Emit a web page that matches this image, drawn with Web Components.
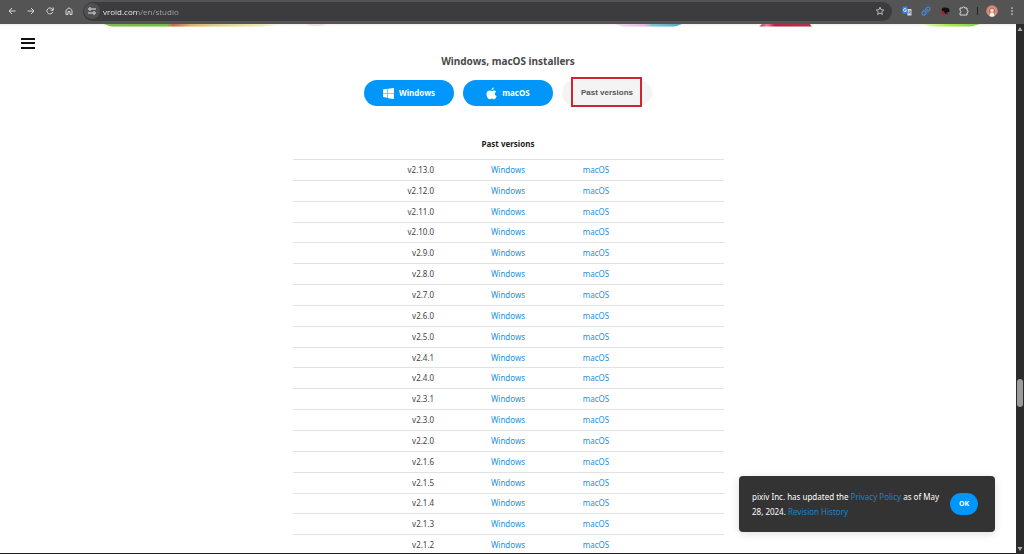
<!DOCTYPE html>
<html lang="en">
<head>
<meta charset="utf-8">
<title>VRoid Studio</title>
<style>
  html, body { height: 100%; }
  body { margin: 0; overflow: hidden; background: #fff; font-family: "Noto Sans", "Open Sans", sans-serif; font-size: 8px; line-height: 12px; color: #444; }
</style>
</head>
<body>
<browser-window></browser-window>

<script>
const define = (name, html, setup) => customElements.define(name, class extends HTMLElement {
  connectedCallback() {
    if (this.shadowRoot) return;
    const template = document.createElement('template');
    template.innerHTML = html;
    this.attachShadow({ mode: 'open' }).append(template.content.cloneNode(true));
    if (setup) setup(this, this.shadowRoot);
  }
});

define('tool-button', `
  <style>
    :host { display: flex; }
    button { display: flex; align-items: center; justify-content: center; width: 19px; height: 19px; padding: 0; border: 0; background: none; color: #d8d8d8; }
  </style>
  <button type="button"><slot></slot></button>`,
  (host, root) => root.querySelector('button').setAttribute('aria-label', host.getAttribute('label')));

define('address-bar', `
  <style>
    :host { display: flex; align-items: center; flex: 1; min-width: 0; height: 19px; margin: 0 5px; padding-right: 3px; border-radius: 10px; background: #3c3b3d; }
    .site { display: flex; align-items: center; justify-content: center; width: 16px; height: 16px; margin-left: 1px; border-radius: 50%; background: #505052; }
    input { flex: 1; min-width: 0; height: 16px; margin: 0 0 0 3px; padding: 0; border: 0; outline: 0; font: 8px/12px "Open Sans", sans-serif; color: #fff;
      background: linear-gradient(90deg, #fff 34px, #aaa 34px); -webkit-background-clip: text; background-clip: text; -webkit-text-fill-color: transparent; }
  </style>
  <span class="site"><svg width="8" height="8" viewBox="0 0 16 16" fill="none" stroke="#e6e6e6" stroke-width="2"><circle cx="4" cy="4" r="2.5"/><path d="M8 4h8M0 12h8"/><circle cx="12" cy="12" r="2.5"/></svg></span>
  <input type="text" value="vroid.com/en/studio" aria-label="Address">
  <tool-button label="Bookmark this page"><svg width="10" height="10" viewBox="0 0 20 20" fill="none" stroke="currentColor" stroke-width="1.6" stroke-linejoin="round"><path d="M10 2.500l2.200 5 5.300.5-4 3.600 1.200 5.400-4.700-2.900L5.300 17l1.200-5.400-4-3.600 5.300-.5z"/></svg></tool-button>`);

define('browser-toolbar', `
  <style>
    :host { display: flex; align-items: center; height: 22px; padding: 0 3px 2px 2px; background: #545454; }
    i { width: 1px; height: 8px; margin: 0 4px; background: #222; }
    .menu { margin-left: 1px; }
  </style>
  <tool-button label="Back"><svg width="8" height="8" viewBox="0 0 16 16" fill="none" stroke="currentColor" stroke-width="2"><path d="M15 8H2M8 2L2 8l6 6"/></svg></tool-button>
  <tool-button label="Forward"><svg width="8" height="8" viewBox="0 0 16 16" fill="none" stroke="currentColor" stroke-width="2"><path d="M1 8h13M8 2l6 6-6 6"/></svg></tool-button>
  <tool-button label="Reload"><svg width="8" height="8" viewBox="0 0 16 16" fill="none" stroke="currentColor" stroke-width="2"><path d="M13.500 10A6 6 0 1 1 12.500 4L14 6"/><path d="M14.500 1v5.500H9"/></svg></tool-button>
  <tool-button label="Home"><svg width="8" height="8" viewBox="0 0 16 16" fill="none" stroke="currentColor" stroke-width="2"><path d="M2 6.500L8 1.500l6 5V15h-4V9H6v6H2z"/></svg></tool-button>
  <address-bar></address-bar>
  <tool-button label="Translate"><svg width="10" height="10" viewBox="0 0 20 20"><path d="M9 6h9a1 1 0 0 1 1 1v11a1 1 0 0 1-1 1h-7z" fill="#d6d8dc"/><path d="M2 1h8l3 14H2a1 1 0 0 1-1-1V2a1 1 0 0 1 1-1z" fill="#3f83ee"/><path d="M8.500 6.300A3 3 0 1 0 9 8.500H6.500" fill="none" stroke="#fff" stroke-width="1.500"/><path d="M13 10h5M17 10c-.5 3-2 4-3 5M14 12l3.500 4" fill="none" stroke="#667" stroke-width="1.200"/></svg></tool-button>
  <tool-button label="Copy link"><svg width="10" height="10" viewBox="0 0 20 20" fill="none" stroke="#4b83d8" stroke-width="2.400" stroke-linecap="round"><path d="M9 6l3-3a3.500 3.500 0 0 1 5 5l-3.500 3.500M11 14l-3 3a3.500 3.500 0 0 1-5-5l3.500-3.500M7.500 12.500l5-5"/></svg></tool-button>
  <tool-button label="Extension"><svg width="10" height="10" viewBox="0 0 20 20"><path d="M3 9C3 4 6 3 11 3s8 2 8 6v3h-4v4H9l-1-4z" fill="#111"/><path d="M2 9l6 2 2 4-4 3-3-3z" fill="#a92430"/><path d="M11 14h4v3h-4z" fill="#6d2528"/></svg></tool-button>
  <tool-button label="Extensions"><svg width="10" height="10" viewBox="0 0 20 20" fill="none" stroke="currentColor" stroke-width="2" stroke-linejoin="round"><path d="M2 4h5a2.200 2.200 0 0 1 4.400 0H16v5a2.200 2.200 0 0 1 0 4.400V18H2v-4.500a2.300 2.300 0 0 0 0-4.500z"/></svg></tool-button>
  <i></i>
  <tool-button label="Profile"><svg width="12" height="12" viewBox="0 0 24 24"><circle cx="12" cy="12" r="11.500" fill="#d58b7c"/><path d="M6 13c0-5 3-7 6-7s6 2 6 7l-2 4H8z" fill="#b86557"/><circle cx="12" cy="11" r="3.500" fill="#f5ddcf"/><path d="M7 22l2-7h6l2 7c-3 2-7 2-10 0z" fill="#fff4e9"/></svg></tool-button>
  <tool-button class="menu" label="Menu"><svg width="8" height="8" viewBox="0 0 16 16" fill="currentColor"><circle cx="8" cy="2" r="1.700"/><circle cx="8" cy="8" r="1.700"/><circle cx="8" cy="14" r="1.700"/></svg></tool-button>`);

define('page-scrollbar', `
  <style>
    :host { display: flex; flex-direction: column; align-items: center; width: 8px; background: #2b2b2b; }
    svg { margin: 2px 0; }
    .before { flex: 351; }
    .thumb { width: 6px; height: 28px; border-radius: 3px; background: #9b9b9b; }
    .after { flex: 139; }
  </style>
  <svg width="6" height="6" viewBox="0 0 6 6" fill="#aaa"><path d="M3 1l2.500 4h-5z"/></svg>
  <span class="before"></span><span class="thumb"></span><span class="after"></span>
  <svg width="6" height="6" viewBox="0 0 6 6" fill="#aaa"><path d="M3 5L.5 1h5z"/></svg>`);

define('artwork-edge', `
  <style>
    :host { display: block; height: 3px; background: linear-gradient(#f4eeee, #fff); }
    svg { display: block; width: 100%; height: 3px; }
  </style>
  <svg viewBox="0 0 1016 3" preserveAspectRatio="none" aria-hidden="true">
    <defs>
      <linearGradient id="a"><stop offset="0" stop-color="#7fbd4f"/><stop offset=".36" stop-color="#78bd3c"/><stop offset=".4" stop-color="#c96a55"/><stop offset=".5" stop-color="#dcb26a"/><stop offset=".65" stop-color="#d9d183"/><stop offset="1" stop-color="#f7efd0"/></linearGradient>
      <linearGradient id="b"><stop offset="0" stop-color="#efdcee"/><stop offset=".45" stop-color="#e0b8df"/><stop offset=".55" stop-color="#7fc3d2"/><stop offset="1" stop-color="#53a9c0"/></linearGradient>
      <linearGradient id="c"><stop offset="0" stop-color="#a9304a"/><stop offset=".15" stop-color="#e08a99"/><stop offset=".3" stop-color="#b72443"/><stop offset="1" stop-color="#b8324d"/></linearGradient>
      <linearGradient id="d"><stop offset="0" stop-color="#e3f7bd"/><stop offset=".5" stop-color="#a9e64c"/><stop offset="1" stop-color="#84cf4b"/></linearGradient>
      <linearGradient id="fade" x2="0" y2="1"><stop offset=".5" stop-color="#fff" stop-opacity="0"/><stop offset="1" stop-color="#fff" stop-opacity=".7"/></linearGradient>
    </defs>
    <path d="M104 0H278L262 3H112z" fill="url(#a)"/>
    <path d="M306 0h20l-5 2h-10z" fill="#f3dde0"/>
    <path d="M615 0h67l-8 3h-50z" fill="url(#b)"/>
    <path d="M762 0h48l2 3h-53z" fill="url(#c)"/>
    <path d="M922 0h58l-10 3h-36z" fill="url(#d)"/>
    <path d="M0 0h1016v3H0z" fill="url(#fade)"/>
  </svg>`);

define('pill-button', `
  <style>
    :host { display: block; }
    button { display: flex; align-items: center; justify-content: center; gap: 5px; width: 90px; height: 26px; padding: 0; border: 0; border-radius: 13px; background: #0096fa; color: #fff; font: bold 8px/12px "Noto Sans", "Open Sans", sans-serif; }
    :host([kind="plain"]) button { background: #f4f4f4; color: #555; font-family: "Liberation Sans", Arial, sans-serif; }
    :host([kind="small"]) button { width: 28px; height: 22px; font-size: 7px; }
  </style>
  <button type="button"><slot></slot></button>`);

define('installer-buttons', `
  <style>
    :host { display: flex; justify-content: center; gap: 9px; }
    .marked { position: relative; }
    .marked::after { content: ""; position: absolute; inset: -3px 10px -1px 9px; border: 2px solid #cf2531; pointer-events: none; }
  </style>
  <pill-button><svg width="11" height="11" viewBox="0 0 22 22" fill="#fff"><path d="M0 3l9-1.300V10H0zM10 1.500L22 0v10H10zM0 11h9v8.500L0 18zM10 11h12v11l-12-1.700z"/></svg>Windows</pill-button>
  <pill-button><svg width="11" height="13" viewBox="0 0 22 26" fill="#fff"><path d="M15.500 1c.2 2.500-1.800 5-4.500 5.200C10.700 3.700 13 1.300 15.500 1zM20.500 9c-4 2.500-3.500 7.500.8 9.300-1 3-3 6.200-5.300 6.200-1.700 0-2.400-1-4.500-1s-2.800 1-4.500 1C4 24.500 1 18.500 1 14c0-4.500 2.800-7 6-7 2 0 3.200 1.100 4.700 1.100S14.500 7 16.500 7c1.500 0 3 .7 4 2z"/></svg>macOS</pill-button>
  <pill-button class="marked" kind="plain">Past versions</pill-button>`);

define('version-table', `
  <style>
    :host { display: block; width: 431px; max-width: 100%; margin: 0 auto; }
    table { width: 100%; height: 396px; table-layout: fixed; border-collapse: collapse; }
    caption { padding-bottom: 9px; font-weight: bold; color: #222; }
    td, th { padding: 0 3px; border-top: 1px solid #e2e2e2; font-weight: normal; text-align: center; }
    th { padding-right: 2px; text-align: right; }
    td:last-child { text-align: left; }
    a { color: #258fdb; text-decoration: none; }
  </style>
  <table><caption>Past versions</caption><tbody></tbody></table>`,
  (host, root) => {
    root.querySelector('tbody').innerHTML = host.getAttribute('versions').split(' ').map(v =>
      `<tr><th scope="row">v${v}</th><td><a href="#windows-${v}">Windows</a></td><td><a href="#macos-${v}">macOS</a></td></tr>`).join('');
  });

define('policy-notice', `
  <style>
    :host { display: flex; align-items: center; gap: 10px; box-sizing: border-box; width: 256px; padding: 13px 17px 13px 13px; border-radius: 4px; background: #333; color: #fff; box-shadow: 0 2px 8px #0002; }
    p { flex: 1; margin: 0; line-height: 15px; }
    a { color: #1783cf; text-decoration: none; }
  </style>
  <p>pixiv Inc. has updated the <a href="#privacy">Privacy Policy</a> as of May<br>28, 2024. <a href="#history">Revision History</a></p>
  <pill-button kind="small">OK</pill-button>`);

define('studio-page', `
  <style>
    :host { display: block; position: relative; overflow: hidden; }
    .menu { position: absolute; left: 18px; top: 9px; display: flex; width: 20px; height: 20px; padding: 3px; border: 0; background: none; }
    h2 { margin: 26px 0 11px; font-size: 10px; line-height: 16px; text-align: center; color: #4a4a4a; }
    version-table { margin-top: 32px; }
    policy-notice { position: absolute; right: 21px; bottom: 21px; }
  </style>
  <artwork-edge></artwork-edge>
  <button class="menu" type="button" aria-label="Open menu"><svg width="14" height="14" viewBox="0 0 14 14" stroke="#111" stroke-width="2"><path d="M0 3h14M0 7h14M0 12h14"/></svg></button>
  <h2>Windows, macOS installers</h2>
  <installer-buttons></installer-buttons>
  <version-table versions="2.13.0 2.12.0 2.11.0 2.10.0 2.9.0 2.8.0 2.7.0 2.6.0 2.5.0 2.4.1 2.4.0 2.3.1 2.3.0 2.2.0 2.1.6 2.1.5 2.1.4 2.1.3 2.1.2"></version-table>
  <policy-notice></policy-notice>`);

define('browser-window', `
  <style>
    :host { display: flex; flex-direction: column; height: 100vh; }
    main { display: flex; flex: 1; min-height: 0; }
    studio-page { flex: 1; border-bottom: 1px solid #222; }
  </style>
  <browser-toolbar></browser-toolbar>
  <main><studio-page></studio-page><page-scrollbar></page-scrollbar></main>`);
</script>
</body>
</html>
